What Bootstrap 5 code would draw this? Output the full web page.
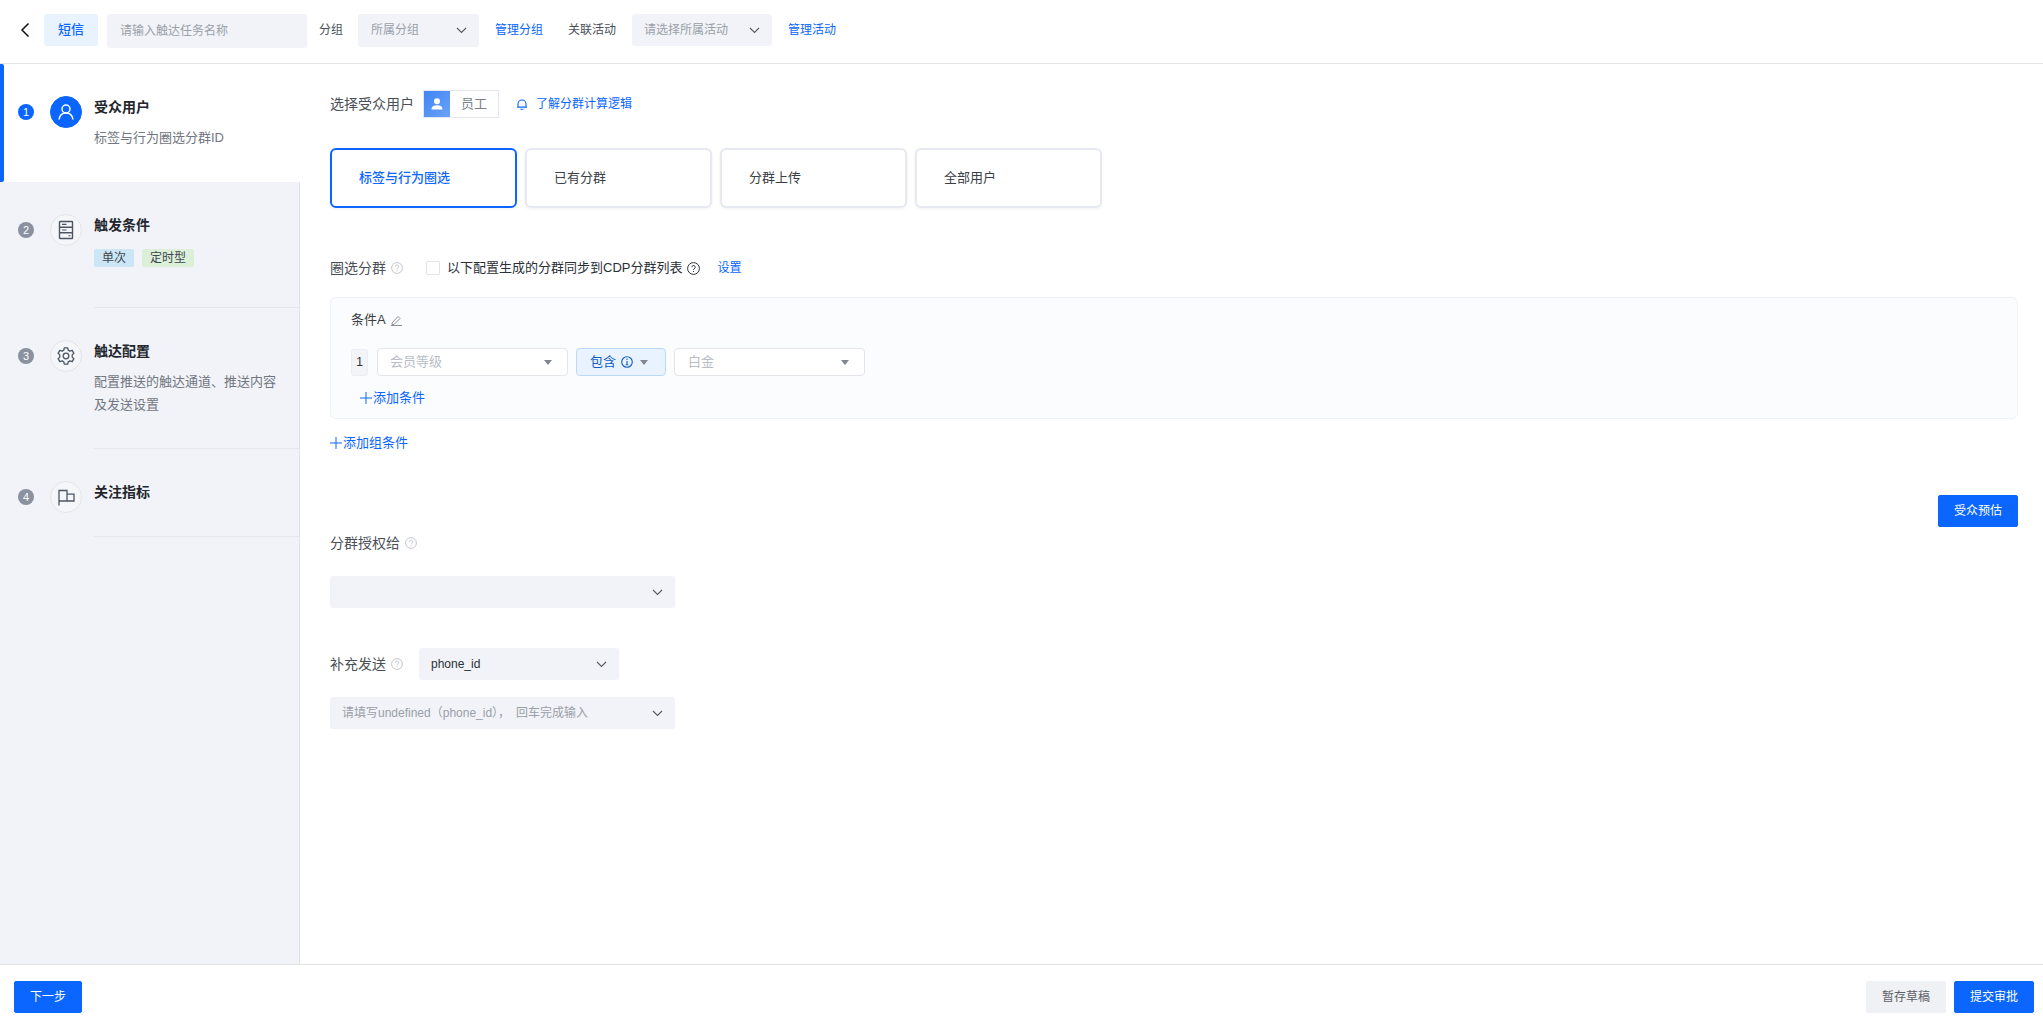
<!DOCTYPE html>
<html lang="zh-CN">
<head>
<meta charset="utf-8">
<title>短信触达任务</title>
<link href="https://cdn.jsdelivr.net/npm/bootstrap@5.3.0/dist/css/bootstrap.min.css" rel="stylesheet">
<style>
html,body{height:100%;}
body{font-family:"Liberation Sans","Noto Sans CJK SC",sans-serif;font-size:13px;color:#2b2f36;background:#fff;overflow:hidden;}
a{text-decoration:none;color:#0a66ff;}
.app-shell{height:1028px;}
.top-bar{height:64px;border-bottom:1px solid #e3e4e8;padding:0 0 3px 20px;font-size:12px;}
.back-ico{width:10px;height:16px;margin-right:14px;}
.sms-chip{width:54px;height:32px;background:#e8f3ff;color:#0a66ff;border-radius:3px;font-size:13px;font-weight:500;margin-right:9px;}
.name-input.form-control{width:200px;height:34px;background:#f1f3f8;border:0;border-radius:3px;font-size:12px;padding:0 13px;margin:2px 12px 0 0;color:#2b2f36;box-shadow:none;}
.name-input.form-control::placeholder{color:#9a9fa8;}
.bar-label{color:#4a4f57;}
.fake-select{background:#f1f3f8;border-radius:3px;height:32px;padding:0 12px;font-size:12px;color:#9a9fa8;flex:none;}
.fake-select svg{width:11px;height:7px;flex:none;}
.sel-group{width:121px;margin:0 16px 0 15px;height:33px;padding-left:13px;}
.sel-act{width:140px;margin:0 16px;}
.link-gap{margin-right:25px;}
.mid-zone{min-height:0;}
.side-nav{width:300px;background:#f1f3f8;border-right:1px solid #dfe1e7;flex:none;}
.step-row{padding-left:18px;}
.step-active{height:118px;background:#fff;margin-right:-1px;position:relative;padding-top:32px;}
.step-active::before{content:"";position:absolute;left:0;top:0;bottom:0;width:4px;background:#0a66ff;border-radius:0 2px 2px 0;}
.step-two{padding-top:32px;}
.step-three,.step-four{padding-top:32px;}
.num-dot{width:16px;height:16px;border-radius:50%;background:#8a919f;color:#fff;font-size:11px;line-height:16px;text-align:center;margin:8px 16px 0 0;flex:none;}
.step-active .num-dot{background:#0a66ff;}
.ico-round{width:32px;height:32px;border-radius:50%;background:#f4f6fa;border:1px solid #e3e5ea;margin-right:12px;flex:none;}
.step-active .ico-round{background:#0a66ff;border-color:#0a66ff;}
.ico-round svg{width:20px;height:20px;}
.step-body{flex:1;border-bottom:1px solid #e5e7ec;}
.step-active .step-body{border-bottom:0;}
.step-two .step-body{height:94px;}
.step-three .step-body{height:109px;}
.step-four .step-body{height:56px;}
.step-title{font-size:14px;font-weight:700;line-height:22px;color:#22262c;}
.step-sub{font-size:13px;line-height:23px;color:#71767f;margin-top:8px;width:190px;}
.mini-tag{height:18px;line-height:18px;font-size:12px;border-radius:2px;color:#3d4650;margin-top:13px;}
.tag-blue{width:40px;background:#cce6f6;margin-right:8px;}
.tag-green{width:52px;background:#dcefd9;}
.work-area{padding:26px 25px 0 30px;min-width:0;}
.field-lab{font-size:14px;color:#4a4f57;line-height:28px;}
.user-toggle{width:76px;height:28px;border:1px solid #e3e6ee;margin-left:9px;}
.user-toggle .blue-side{width:26px;background:linear-gradient(135deg,#3f86f6,#6ba2f6);}
.user-toggle .txt-side{flex:1;color:#7a7f87;font-size:13px;}
.user-toggle svg{width:14px;height:14px;}
.bell-link{font-size:12px;margin-left:18px;}
.bell-link svg{width:10px;height:11px;margin-right:9px;}
.choice-line{margin-top:30px;gap:8px;}
.choice-card.card{width:187px;height:60px;border:2.5px solid #e6e9f1;border-radius:6px;padding-left:27px;font-size:13px;color:#3a3e45;box-shadow:0 1px 3px rgba(60,70,110,.08);justify-content:center;}
.choice-card.on{border-color:#0a66ff;color:#0a66ff;font-weight:500;}
.sync-line{margin-top:46px;height:28px;}
.help-ico{width:12px;height:12px;margin-left:5px;flex:none;}
.sync-check.form-check-input{width:14px;height:14px;margin:0 7px 0 23px;border:1.5px solid #dfe3ea;border-radius:2px;background-color:#fff;flex:none;}
.qmark{width:13px;height:13px;margin:0 17px 0 5px;}
.small-link{font-size:12px;}
.cond-panel{height:122px;margin-top:15px;background:#fbfcfe;border:1px solid #eef1f6;border-radius:6px;padding:11px 20px;}
.cond-title{line-height:22px;color:#3a3e45;}
.cond-title svg{width:11px;height:11px;margin-left:5px;}
.cond-line{margin-top:17px;gap:8px;}
.idx-box{width:17px;height:27px;background:#f3f4f7;border:1px solid #eceef2;border-radius:3px;font-size:12px;margin-right:1px;}
.rule-select{height:28px;border:1px solid #e3e5ea;border-radius:4px;background:#fff;padding:0 15px 0 12px;color:#b9bdc5;}
.rule-a{width:191px;}
.rule-c{width:191px;padding-left:13px;}
.rule-b{width:90px;background:#e8f3ff;border-color:#bcd9fb;color:#0f5cc4;padding:0 12px 0 13px;}
.rule-b .inf{width:12px;height:12px;margin:0 7px 0 5px;}
.tri{width:0;height:0;border-left:4.5px solid transparent;border-right:4.5px solid transparent;border-top:5.5px solid #80858e;display:block;}
.add-link{font-size:13px;line-height:22px;}
.add-link svg{width:12px;height:12px;margin-right:1px;}
.add-inner{margin:11px 0 0 9px;}
.add-outer{margin-top:13px;}
.btn.blue-btn{width:80px;height:32px;padding:0;background:#0a66ff;border-color:#0a66ff;color:#fff;border-radius:2px;font-size:12px;}
.estimate-line{margin-top:41px;}
.grant-line{height:28px;margin-top:2px;}
.wide-select{width:345px;color:#9a9fa8;}
.mt-grant{margin-top:19px;}
.send-line{margin-top:40px;}
.sel-phone{width:200px;margin-left:16px;color:#2b2f36;}
.mt-tip{margin-top:17px;}
.foot-bar{height:64px;border-top:1px solid #e2e3e8;padding:0 9px 0 14px;flex:none;}
.btn.grey-btn{width:80px;height:32px;padding:0;background:#f0f1f4;border-color:#f0f1f4;color:#5c6068;border-radius:2px;font-size:12px;margin-right:8px;}
.btn.step-btn{width:68px;}
</style>
</head>
<body>
<div class="app-shell d-flex flex-column">
  <header class="top-bar d-flex align-items-center flex-none">
    <svg class="back-ico" viewBox="0 0 10 16" fill="none" stroke="#111" stroke-width="1.5"><path d="M8.5 1.5 2 8l6.500 6.500"/></svg>
    <span class="sms-chip d-flex align-items-center justify-content-center">短信</span>
    <input class="name-input form-control" type="text" placeholder="请输入触达任务名称">
    <span class="bar-label">分组</span>
    <div class="fake-select sel-group d-flex align-items-center justify-content-between"><span>所属分组</span><svg viewBox="0 0 11 7" fill="none" stroke="#555b64" stroke-width="1.100"><path d="M1 1l4.500 4.500L10 1"/></svg></div>
    <a href="#" class="link-gap">管理分组</a>
    <span class="bar-label">关联活动</span>
    <div class="fake-select sel-act d-flex align-items-center justify-content-between"><span>请选择所属活动</span><svg viewBox="0 0 11 7" fill="none" stroke="#555b64" stroke-width="1.100"><path d="M1 1l4.500 4.500L10 1"/></svg></div>
    <a href="#">管理活动</a>
  </header>

  <div class="mid-zone d-flex flex-grow-1">
    <nav class="side-nav">
      <div class="step-row step-active d-flex">
        <div class="num-dot">1</div>
        <div class="ico-round d-flex align-items-center justify-content-center">
          <svg viewBox="0 0 20 20" fill="none" stroke="#fff" stroke-width="1.500"><circle cx="10" cy="7" r="4"/><path d="M3 17.500c.6-4 3.300-6.400 7-6.400s6.400 2.400 7 6.400"/></svg>
        </div>
        <div class="step-body">
          <div class="step-title">受众用户</div>
          <div class="step-sub">标签与行为圈选分群ID</div>
        </div>
      </div>
      <div class="step-row step-two d-flex">
        <div class="num-dot">2</div>
        <div class="ico-round d-flex align-items-center justify-content-center">
          <svg viewBox="0 0 20 20" fill="none" stroke="#4c5663" stroke-width="1.400"><rect x="3.500" y="1.500" width="13" height="17" rx=".6"/><path d="M3.500 7.200h13M3.500 12.800h13"/><path d="M6 4.400h4.500M6 10h4.500M12.500 15.700h2" stroke-width="1.100"/></svg>
        </div>
        <div class="step-body">
          <div class="step-title">触发条件</div>
          <div class="d-flex">
            <span class="mini-tag tag-blue text-center">单次</span>
            <span class="mini-tag tag-green text-center">定时型</span>
          </div>
        </div>
      </div>
      <div class="step-row step-three d-flex">
        <div class="num-dot">3</div>
        <div class="ico-round d-flex align-items-center justify-content-center">
          <svg viewBox="0 0 20 20" fill="none" stroke="#4c5663" stroke-width="1.300"><circle cx="10" cy="10" r="2.800"/><path d="M8.300 1.800h3.400l.5 2.300 1.700 1 2.300-.7 1.700 2.900-1.700 1.600v2.200l1.700 1.600-1.700 2.900-2.300-.7-1.700 1-.5 2.300H8.300l-.5-2.300-1.700-1-2.300.7-1.700-2.900 1.700-1.600V8.900L2.100 7.300l1.700-2.900 2.300.7 1.700-1z" stroke-linejoin="round"/></svg>
        </div>
        <div class="step-body">
          <div class="step-title">触达配置</div>
          <div class="step-sub">配置推送的触达通道、推送内容及发送设置</div>
        </div>
      </div>
      <div class="step-row step-four d-flex">
        <div class="num-dot">4</div>
        <div class="ico-round d-flex align-items-center justify-content-center">
          <svg viewBox="0 0 20 20" fill="none" stroke="#4c5663" stroke-width="1.300"><path d="M3 18.500V3.500h8v10.500M11 7.200h7V14H3"/></svg>
        </div>
        <div class="step-body">
          <div class="step-title">关注指标</div>
        </div>
      </div>
    </nav>

    <main class="work-area flex-grow-1">
      <div class="d-flex align-items-center">
        <span class="field-lab">选择受众用户</span>
        <div class="user-toggle d-flex">
          <span class="blue-side d-flex align-items-center justify-content-center">
            <svg viewBox="0 0 14 14" fill="#fff"><circle cx="7" cy="4.200" r="3"/><path d="M1.500 12.500c0-3 2-4.300 5.500-4.300s5.500 1.300 5.500 4.300z"/></svg>
          </span>
          <span class="txt-side d-flex align-items-center justify-content-center">员工</span>
        </div>
        <a href="#" class="bell-link d-flex align-items-center">
          <svg viewBox="0 0 10 11" fill="none" stroke="#0a66ff" stroke-width="1.100"><path d="M1 8V5a4 4 0 0 1 8 0v3zM0 8.200h10M3.500 10.300h3"/></svg>了解分群计算逻辑
        </a>
      </div>

      <div class="choice-line d-flex">
        <div class="card choice-card on">标签与行为圈选</div>
        <div class="card choice-card">已有分群</div>
        <div class="card choice-card">分群上传</div>
        <div class="card choice-card">全部用户</div>
      </div>

      <div class="sync-line d-flex align-items-center">
        <span class="field-lab">圈选分群</span>
        <svg class="help-ico" viewBox="0 0 12 12" fill="none" stroke="#c3c7ce"><circle cx="6" cy="6" r="5.400"/><path d="M4.400 4.700a1.600 1.600 0 1 1 2.500 1.300c-.6.400-.9.700-.9 1.300M6 8.300v1"/></svg>
        <input class="sync-check form-check-input" type="checkbox" aria-label="同步">
        <span>以下配置生成的分群同步到CDP分群列表</span>
        <svg class="qmark" viewBox="0 0 13 13" fill="none" stroke="#2b2f36"><circle cx="6.500" cy="6.500" r="5.900"/><path d="M4.800 5.200a1.700 1.700 0 1 1 2.700 1.400c-.7.400-1 .7-1 1.400M6.500 9v1"/></svg>
        <a href="#" class="small-link">设置</a>
      </div>

      <section class="cond-panel">
        <div class="cond-title d-flex align-items-center">条件A
          <svg viewBox="0 0 11 11" fill="none" stroke="#8b9098"><path d="M1 8l6-6.500 2 2L3 9.500H1zM0 10.500h11"/></svg>
        </div>
        <div class="cond-line d-flex align-items-center">
          <span class="idx-box d-flex align-items-center justify-content-center">1</span>
          <div class="rule-select rule-a d-flex align-items-center justify-content-between"><span>会员等级</span><i class="tri"></i></div>
          <div class="rule-select rule-b d-flex align-items-center"><span>包含</span>
            <svg class="inf" viewBox="0 0 12 12" fill="none" stroke="#0f5cc4" stroke-width="1.100"><circle cx="6" cy="6" r="5.300"/><path d="M6 5v3.800M4.800 8.800h2.400M6 2.800v1.200"/></svg><i class="tri"></i></div>
          <div class="rule-select rule-c d-flex align-items-center justify-content-between"><span>白金</span><i class="tri"></i></div>
        </div>
        <a href="#" class="add-link add-inner d-flex align-items-center"><svg viewBox="0 0 12 12" stroke="#0a66ff"><path d="M6 0v12M0 6h12"/></svg>添加条件</a>
      </section>

      <a href="#" class="add-link add-outer d-flex align-items-center"><svg viewBox="0 0 12 12" stroke="#0a66ff"><path d="M6 0v12M0 6h12"/></svg>添加组条件</a>

      <div class="estimate-line d-flex justify-content-end">
        <button type="button" class="btn btn-primary blue-btn">受众预估</button>
      </div>

      <div class="grant-line d-flex align-items-center">
        <span class="field-lab">分群授权给</span>
        <svg class="help-ico" viewBox="0 0 12 12" fill="none" stroke="#c3c7ce"><circle cx="6" cy="6" r="5.400"/><path d="M4.400 4.700a1.600 1.600 0 1 1 2.500 1.300c-.6.400-.9.700-.9 1.300M6 8.300v1"/></svg>
      </div>
      <div class="fake-select wide-select mt-grant d-flex align-items-center justify-content-end"><svg viewBox="0 0 11 7" fill="none" stroke="#555b64" stroke-width="1.100"><path d="M1 1l4.500 4.500L10 1"/></svg></div>

      <div class="send-line d-flex align-items-center">
        <span class="field-lab">补充发送</span>
        <svg class="help-ico" viewBox="0 0 12 12" fill="none" stroke="#c3c7ce"><circle cx="6" cy="6" r="5.400"/><path d="M4.400 4.700a1.600 1.600 0 1 1 2.500 1.300c-.6.400-.9.700-.9 1.300M6 8.300v1"/></svg>
        <div class="fake-select sel-phone d-flex align-items-center justify-content-between"><span>phone_id</span><svg viewBox="0 0 11 7" fill="none" stroke="#555b64" stroke-width="1.100"><path d="M1 1l4.500 4.500L10 1"/></svg></div>
      </div>
      <div class="fake-select wide-select mt-tip d-flex align-items-center justify-content-between"><span>请填写undefined（phone_id），&ensp;回车完成输入</span><svg viewBox="0 0 11 7" fill="none" stroke="#555b64" stroke-width="1.100"><path d="M1 1l4.500 4.500L10 1"/></svg></div>
    </main>
  </div>

  <footer class="foot-bar d-flex align-items-center justify-content-between">
    <button type="button" class="btn btn-primary blue-btn step-btn">下一步</button>
    <div class="d-flex">
      <button type="button" class="btn btn-secondary grey-btn">暂存草稿</button>
      <button type="button" class="btn btn-primary blue-btn">提交审批</button>
    </div>
  </footer>
</div>
</body>
</html>
